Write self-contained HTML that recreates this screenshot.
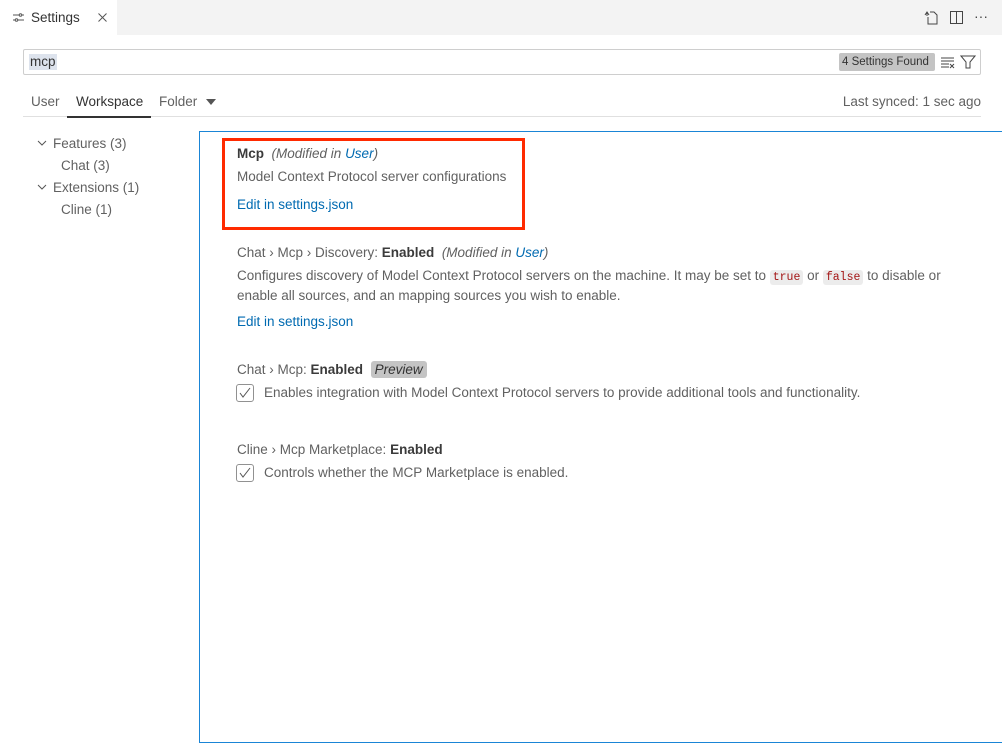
<!DOCTYPE html>
<html><head><style>
*{margin:0;padding:0;box-sizing:border-box}
body{width:1002px;height:743px;background:#fff;font-family:"Liberation Sans",sans-serif;font-size:13.5px;color:#616161;position:relative;overflow:hidden}
.a{position:absolute;white-space:nowrap}
.tabbar{position:absolute;left:0;top:0;width:1002px;height:35px;background:#f3f3f3}
.tab{position:absolute;left:0;top:0;width:117px;height:35px;background:#fff}
b{color:#3b3b3b;font-weight:bold}
i{font-style:italic}
.lnk{color:#006ab1}
code{font-family:"Liberation Mono",monospace;font-size:11.5px;color:#a31515;background:#ececec;border-radius:3px;padding:1px 3px}
.cb{position:absolute;width:18px;height:18px;border:1px solid #919191;border-radius:3px;background:#fff}
</style></head><body>
<div class="tabbar"><div class="tab">
<svg class="a" style="left:13px;top:12px" width="11" height="11" viewBox="0 0 11 11" fill="none" stroke="#555" stroke-width="1"><path d="M0 3h6M9 3h2M0 8h2M5 8h6"/><circle cx="7.5" cy="3" r="1.3"/><circle cx="3.5" cy="8" r="1.3"/></svg>
<div class="a" style="left:31px;top:10px;color:#333">Settings</div>
<svg class="a" style="left:98px;top:13px" width="9" height="9" fill="none" stroke="#555" stroke-width="1"><path d="M.5 .5l8 8M8.5 .5l-8 8"/></svg>
</div>
<svg class="a" style="left:924px;top:10px" width="14" height="15" viewBox="0 0 14 15" fill="none" stroke="#444" stroke-width="1"><path d="M6 2h4l3 3v9H4V7"/><path d="M1 5l2-3 2 3M3 2v4"/></svg>
<svg class="a" style="left:950px;top:11px" width="13" height="13" viewBox="0 0 13 13" fill="none" stroke="#444" stroke-width="1"><rect x=".5" y=".5" width="12" height="12"/><path d="M6.5 .5v12"/></svg>
<div class="a" style="left:974px;top:8px;color:#444;font-size:14px">···</div>
</div>
<div class="a" style="left:23px;top:49px;width:958px;height:26px;border:1px solid #cecece;border-radius:2px"></div>
<div class="a" style="left:29px;top:54px;background:#dde3ed;color:#333;height:16px;padding:0 1px;line-height:16px">mcp</div>
<div class="a" style="left:839px;top:53px;background:#c4c4c4;color:#333;font-size:11.5px;height:18px;line-height:18px;padding:0 3px;border-radius:2px;width:96px">4 Settings Found</div>
<svg class="a" style="left:940px;top:55px" width="16" height="14" viewBox="0 0 16 14" fill="none" stroke="#444" stroke-width="1"><path d="M1 3h13M1 6h13M1 9h8M1 12h8M10 9l4 4M14 9l-4 4"/></svg>
<svg class="a" style="left:960px;top:55px" width="16" height="14" viewBox="0 0 16 14" fill="none" stroke="#444" stroke-width="1"><path d="M1 1h14L10 7v6H6V7z"/></svg>
<div class="a" style="left:31px;top:94px">User</div>
<div class="a" style="left:76px;top:94px;color:#333">Workspace</div>
<div class="a" style="left:159px;top:94px">Folder</div>
<svg class="a" style="left:206px;top:99px" width="10" height="6"><path d="M0 0h10L5 6z" fill="#555"/></svg>
<div class="a" style="right:21px;top:94px">Last synced: 1 sec ago</div>
<div class="a" style="left:23px;top:116px;width:958px;height:1px;background:#e0e0e0"></div>
<div class="a" style="left:67px;top:116px;width:84px;height:2px;background:#333"></div>
<svg class="a" style="left:37px;top:140px" width="10" height="6" fill="none" stroke="#555"><path d="M1 1l4 4 4-4"/></svg>
<div class="a" style="left:53px;top:136px">Features (3)</div>
<div class="a" style="left:61px;top:158px">Chat (3)</div>
<svg class="a" style="left:37px;top:184px" width="10" height="6" fill="none" stroke="#555"><path d="M1 1l4 4 4-4"/></svg>
<div class="a" style="left:53px;top:180px">Extensions (1)</div>
<div class="a" style="left:61px;top:202px">Cline (1)</div>
<div class="a" style="left:199px;top:131px;width:810px;height:612px;border:1px solid #1a85d6"></div>
<div class="a" style="left:222px;top:138px;width:303px;height:92px;border:3px solid #ff2a00"></div>
<div class="a" style="left:237px;top:146px"><b>Mcp</b>&nbsp; <i>(Modified in <span class="lnk">User</span>)</i></div>
<div class="a" style="left:237px;top:169px">Model Context Protocol server configurations</div>
<div class="a lnk" style="left:237px;top:197px">Edit in settings.json</div>
<div class="a" style="left:237px;top:245px">Chat › Mcp › Discovery: <b>Enabled</b>&nbsp; <i>(Modified in <span class="lnk">User</span>)</i></div>
<div class="a" style="left:237px;top:268px">Configures discovery of Model Context Protocol servers on the machine. It may be set to <code>true</code> or <code>false</code> to disable or</div>
<div class="a" style="left:237px;top:288px">enable all sources, and an mapping sources you wish to enable.</div>
<div class="a lnk" style="left:237px;top:314px">Edit in settings.json</div>
<div class="a" style="left:237px;top:362px">Chat › Mcp: <b>Enabled</b>&nbsp; <i style="background:#c4c4c4;color:#333;padding:1px 4px;border-radius:3px">Preview</i></div>
<div class="cb" style="left:236px;top:384px"><svg width="16" height="16" fill="none" stroke="#555"><path d="M3 8l3 4 7-9"/></svg></div>
<div class="a" style="left:264px;top:385px">Enables integration with Model Context Protocol servers to provide additional tools and functionality.</div>
<div class="a" style="left:237px;top:442px">Cline › Mcp Marketplace: <b>Enabled</b></div>
<div class="cb" style="left:236px;top:464px"><svg width="16" height="16" fill="none" stroke="#555"><path d="M3 8l3 4 7-9"/></svg></div>
<div class="a" style="left:264px;top:465px">Controls whether the MCP Marketplace is enabled.</div>
</body></html>
